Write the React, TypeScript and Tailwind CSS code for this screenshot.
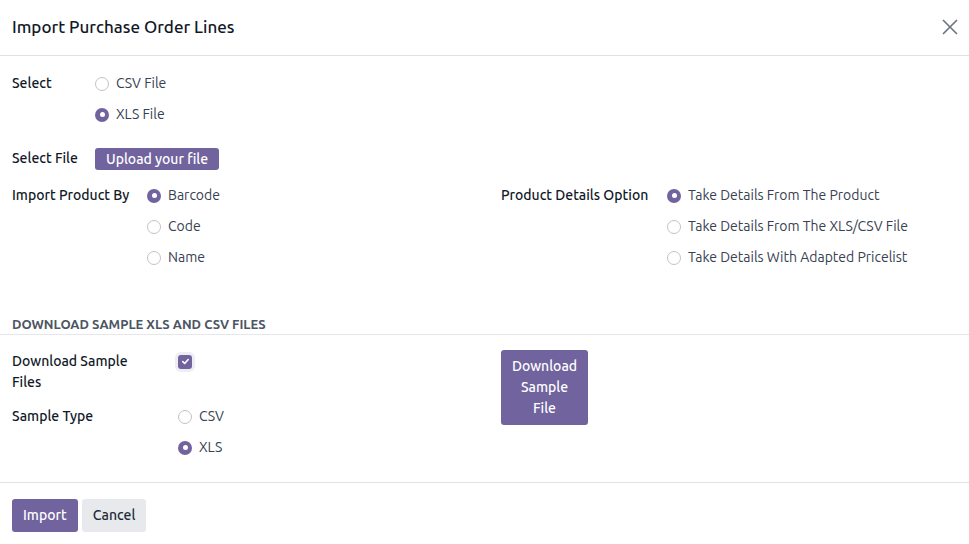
import React from "react";

const Radio = ({ checked }: { checked?: boolean }) =>
  checked ? (
    <span className="w-[14px] h-[14px] rounded-full bg-[#71639e] flex items-center justify-center shrink-0">
      <span className="w-[5px] h-[5px] rounded-full bg-white" />
    </span>
  ) : (
    <span className="w-[14px] h-[14px] rounded-full border border-[#bfc3c9] bg-white shrink-0" />
  );

const RadioItem = ({ label, checked }: { label: string; checked?: boolean }) => (
  <div className="flex items-center h-[21px] gap-[7px]">
    <Radio checked={checked} />
    <span className="text-[#374151]">{label}</span>
  </div>
);

const RadioList = ({ items, checked }: { items: string[]; checked: number }) => (
  <div className="flex flex-col gap-[10px]">
    {items.map((it, i) => (
      <RadioItem key={it} label={it} checked={i === checked} />
    ))}
  </div>
);

export default function App() {
  return (
    <div
      className="w-[969px] h-[544px] bg-white text-[14px] leading-[21px] text-[#374151] flex flex-col"
      style={{ fontFamily: "Ubuntu, Roboto, 'Noto Sans', sans-serif" }}
    >
      {/* header */}
      <div className="h-[56px] shrink-0 border-b border-[#dee2e6] flex items-center justify-between pl-3 pr-[10px]">
        <h1 className="text-[17px] font-medium text-[#111827] leading-[24px] -mt-[1px]">
          Import Purchase Order Lines
        </h1>
        <svg width="18" height="18" viewBox="0 0 18 18" className="text-[#6b7280] -mt-[1px]">
          <path d="M2 2L16 16M16 2L2 16" stroke="currentColor" strokeWidth="1.6" fill="none" />
        </svg>
      </div>

      {/* body */}
      <div className="flex-1 flex flex-col pt-[17px]">
        <div className="px-3">
          <div className="flex">
            <div className="w-[83px] font-medium text-[#111827]">Select</div>
            <RadioList items={["CSV File", "XLS File"]} checked={1} />
          </div>
          <div className="flex items-center mt-[23px] h-[22px]">
            <div className="w-[83px] font-medium text-[#111827] -mt-[2px]">Select File</div>
            <button className="h-[22px] px-[11px] rounded-[3px] bg-[#71639e] text-white font-medium leading-[22px]">
              Upload your file
            </button>
          </div>
          <div className="grid grid-cols-[489px_1fr] mt-[15px]">
            <div className="flex">
              <div className="w-[135px] font-medium text-[#111827]">Import Product By</div>
              <RadioList items={["Barcode", "Code", "Name"]} checked={0} />
            </div>
            <div className="flex">
              <div className="w-[166px] font-medium text-[#111827]">Product Details Option</div>
              <RadioList
                items={[
                  "Take Details From The Product",
                  "Take Details From The XLS/CSV File",
                  "Take Details With Adapted Pricelist",
                ]}
                checked={0}
              />
            </div>
          </div>
        </div>

        <div className="mt-[47px] border-b border-[#e5e7eb] px-3">
          <div className="text-[13px] font-bold uppercase text-[#4b5563] leading-[19px]">
            Download sample XLS and CSV files
          </div>
        </div>

        <div className="px-3 pt-[16px] grid grid-cols-[489px_1fr]">
          <div className="flex flex-col">
            <div className="flex">
              <div className="w-[166px] font-medium text-[#111827]">
                Download Sample
                <br />
                Files
              </div>
              <div className="h-[21px] flex items-center">
                <span className="w-[14px] h-[14px] rounded-[3px] bg-[#71639e] flex items-center justify-center shadow-[0_0_0_3px_#efedf4]">
                  <svg width="9" height="9" viewBox="0 0 10 10">
                    <path d="M2 5.2L4.1 7.2L8 2.8" stroke="white" strokeWidth="1.8" fill="none" strokeLinecap="round" strokeLinejoin="round" />
                  </svg>
                </span>
              </div>
            </div>
            <div className="flex mt-[13px]">
              <div className="w-[166px] font-medium text-[#111827]">Sample Type</div>
              <RadioList items={["CSV", "XLS"]} checked={1} />
            </div>
          </div>
          <div className="-mt-[1px]">
            <button className="w-[87px] h-[75px] rounded-[3px] bg-[#71639e] text-white font-medium leading-[21px] px-[8px]">
              Download Sample File
            </button>
          </div>
        </div>
      </div>

      {/* footer */}
      <div className="h-[62px] shrink-0 border-t border-[#dee2e6] pt-[16px] px-3 flex gap-[4px] items-start">
        <button className="h-[33px] px-[11px] rounded-[3px] bg-[#71639e] text-white font-medium">Import</button>
        <button className="h-[33px] px-[11px] rounded-[3px] bg-[#e7e9ed] text-[#1f2937] font-medium">Cancel</button>
      </div>
    </div>
  );
}
